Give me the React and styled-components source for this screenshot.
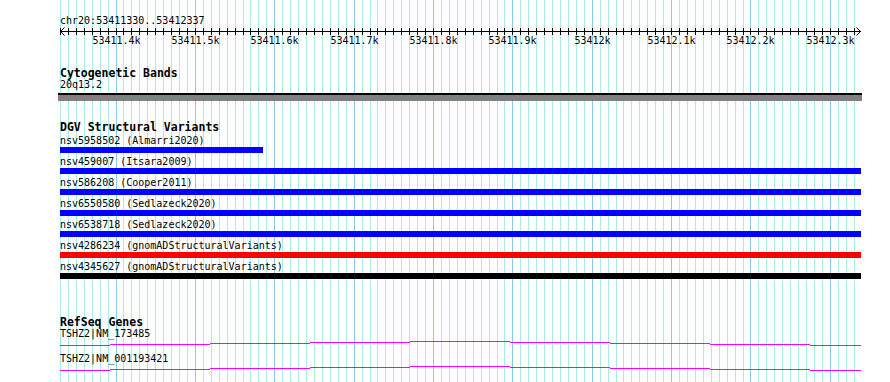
import React from 'react';
import styled, { createGlobalStyle } from 'styled-components';

const START = 53411330;
const END = 53412337;
const LEFT = 60;
const PX_PER_BP = 800 / 1008;
const TRACK_WIDTH = 801;

const bpToX = (bp) => (bp - START) * PX_PER_BP;

const GlobalStyle = createGlobalStyle`
    html, body {
        margin: 0;
        padding: 0;
        background: #ffffff;
    }
`

const Page = styled.div`
    position: relative;
    width: 890px;
    height: 382px;
    overflow: hidden;
    background: #ffffff;
    font-family: "DejaVu Sans Mono", "Liberation Mono", monospace;
    color: #000;
`

const Grid = styled.svg`
    position: absolute;
    top: 0;
    left: 0;
    z-index: 0;
`

const Content = styled.div`
    position: relative;
    z-index: 1;
    display: flex;
    flex-direction: column;
    padding-left: ${LEFT}px;
`

const Ruler = styled.div`
    display: flex;
    flex-direction: column;
    padding-top: 15px;
`

const Label = styled.div`
    font-size: 10px;
    line-height: 12px;
    height: 12px;
    white-space: nowrap;
`

const AxisWrap = styled.div`
    position: relative;
    height: 18px;
    width: ${TRACK_WIDTH + 4}px;
`

const TickLabel = styled.span`
    position: absolute;
    top: 8px;
    font-size: 10px;
    line-height: 12px;
    transform: translateX(-50%);
    white-space: nowrap;
`

const Track = styled.section`
    display: flex;
    flex-direction: column;
    margin-top: ${(p) => p.$gap}px;
`

const Title = styled.h3`
    margin: 0;
    font-size: 11.5px;
    line-height: 12px;
    height: 12px;
    font-weight: bold;
    white-space: nowrap;
`

const Band = styled.div`
    margin-top: 2px;
    margin-left: -2px;
    width: 804px;
    height: 6px;
    background: #808080;
    border-top: 2px solid #000;
`

const Feature = styled.div`
    display: flex;
    flex-direction: column;
    margin-top: ${(p) => p.$gap}px;
`

const Bar = styled.div`
    height: 6px;
    background: ${(p) => p.$color};
`

const GeneLine = styled.svg`
    display: block;
`

const variants = [
    { name: 'nsv5958502', src: 'Almarri2020', end: 53411586, color: '#0000ff' },
    { name: 'nsv459007', src: 'Itsara2009', end: END + 5, color: '#0000ff' },
    { name: 'nsv586208', src: 'Cooper2011', end: END + 5, color: '#0000ff' },
    { name: 'nsv6550580', src: 'Sedlazeck2020', end: END + 5, color: '#0000ff' },
    { name: 'nsv6538718', src: 'Sedlazeck2020', end: END + 5, color: '#0000ff' },
    { name: 'nsv4286234', src: 'gnomADStructuralVariants', end: END + 5, color: '#ff0000' },
    { name: 'nsv4345627', src: 'gnomADStructuralVariants', end: END + 5, color: '#000000' },
];

const genes = ['TSHZ2|NM_173485', 'TSHZ2|NM_001193421'];

// stepped intron line, pixel rows per 100px segment
const steps = [
    [0, 50, 5], [50, 150, 4], [150, 250, 3], [250, 350, 2], [350, 450, 1],
    [450, 550, 2], [550, 650, 3], [650, 750, 4], [750, 801, 5],
];

function GridLines() {
    const lines = [];
    for (let i = 0; i <= 100; i++) {
        const bp = START + i * 10;
        const x = Math.round(LEFT + bpToX(bp)) + 0.5;
        const major = bp % 100 === 0;
        lines.push(
            <line key={i} x1={x} y1={0} x2={x} y2={382}
                stroke={major ? '#86cdea' : '#a8ecee'} strokeWidth={1} />
        );
    }
    return (
        <Grid width="890" height="382" shapeRendering="crispEdges">
            {lines}
        </Grid>
    );
}

function Axis() {
    const ticks = [];
    const labels = [];
    for (let i = 0; i <= 100; i++) {
        const bp = START + i * 10;
        const x = Math.round(bpToX(bp)) + 0.5;
        ticks.push(<line key={i} x1={x} y1={1} x2={x} y2={8} stroke="#000" />);
        if (bp % 100 === 0) {
            const k = (bp / 1000).toFixed(1).replace(/\.0$/, '');
            labels.push(<TickLabel key={bp} style={{ left: Math.round(bpToX(bp)) + 0.5 }}>{k}k</TickLabel>);
        }
    }
    return (
        <AxisWrap>
            <svg width={TRACK_WIDTH + 4} height="10" shapeRendering="crispEdges" style={{ display: 'block' }}>
                <line x1="0" y1="4.5" x2={TRACK_WIDTH} y2="4.5" stroke="#000" />
                {ticks}
                <path d="M0.5 4.5 L4.5 0.5 M0.5 4.5 L4.5 8.5" stroke="#000" fill="none" shapeRendering="auto" />
                <path d={`M${TRACK_WIDTH - 0.5} 4.5 L${TRACK_WIDTH - 4.5} 0.5 M${TRACK_WIDTH - 0.5} 4.5 L${TRACK_WIDTH - 4.5} 8.5`} stroke="#000" fill="none" shapeRendering="auto" />
            </svg>
            {labels}
        </AxisWrap>
    );
}

function App() {
    return (
        <Page>
            <GlobalStyle />
            <GridLines />
            <Content>
                <Ruler>
                    <Label>chr20:{START}..{END}</Label>
                    <Axis />
                </Ruler>

                <Track $gap={22}>
                    <Title>Cytogenetic Bands</Title>
                    <Label>20q13.2</Label>
                    <Band />
                </Track>

                <Track $gap={20}>
                    <Title>DGV Structural Variants</Title>
                    {variants.map((v, i) => (
                        <Feature key={v.name} $gap={i === 0 ? 2 : 3}>
                            <Label>{v.name} ({v.src})</Label>
                            <Bar $color={v.color} style={{ width: Math.min(TRACK_WIDTH, Math.round(bpToX(v.end))) }} />
                        </Feature>
                    ))}
                </Track>

                <Track $gap={37}>
                    <Title>RefSeq Genes</Title>
                    {genes.map((g, i) => (
                        <Feature key={g} $gap={i === 0 ? 0 : 7}>
                            <Label>{g}</Label>
                            <GeneLine width={TRACK_WIDTH} height="6" shapeRendering="crispEdges">
                                {steps.map(([a, b, y]) => (
                                    <line key={a} x1={a} y1={y + 0.5} x2={b} y2={y + 0.5} stroke="#ff00ff" />
                                ))}
                            </GeneLine>
                        </Feature>
                    ))}
                </Track>
            </Content>
        </Page>
    );
}

export default App;
